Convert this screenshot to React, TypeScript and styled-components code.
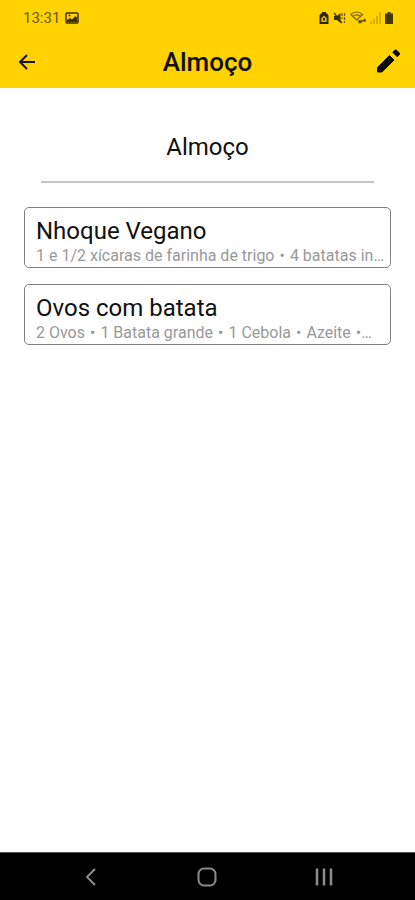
import React, { Fragment } from "react";
import styled, { createGlobalStyle } from "styled-components";

const GlobalStyle = createGlobalStyle`
  *, *::before, *::after { box-sizing: border-box; }
  body {
    margin: 0;
    background: #fff;
    color: #111;
    font-family: Roboto, "Liberation Sans", sans-serif;
  }
`;

const Screen = styled.div`
  display: flex;
  flex-direction: column;
  min-height: 100vh;
`;

const TopArea = styled.header`
  background: #ffd200;
`;

const StatusBar = styled.div`
  display: flex;
  align-items: center;
  justify-content: space-between;
  height: 35px;
  padding: 0 22px 0 23px;
`;

const StatusGroup = styled.div<{ $gap: number }>`
  display: flex;
  align-items: center;
  gap: ${({ $gap }) => $gap}px;
`;

const Clock = styled.time`
  font-size: 15px;
  line-height: 20px;
  color: #6b5a08;
`;

const AppBar = styled.div`
  display: grid;
  grid-template-columns: 40px 1fr 40px;
  align-items: center;
  height: 53px;
  padding: 0 7px;
`;

const IconButton = styled.button`
  display: flex;
  align-items: center;
  justify-content: center;
  width: 40px;
  height: 40px;
  padding: 0;
  border: 0;
  background: none;
  color: inherit;
  cursor: pointer;
`;

const AppTitle = styled.h1`
  margin: 0;
  font-size: 26px;
  line-height: 32px;
  font-weight: 500;
  text-align: center;
`;

const Content = styled.main`
  flex: 1;
  padding: 41px 24px 24px;
`;

const MealTitle = styled.h2`
  margin: 0 17px 24px;
  padding-bottom: 16px;
  border-bottom: 2px solid #c4c4c4;
  font-size: 24px;
  line-height: 36px;
  font-weight: 400;
  text-align: center;
`;

const RecipeList = styled.ul`
  display: flex;
  flex-direction: column;
  gap: 16px;
  margin: 0;
  padding: 0;
  list-style: none;
`;

const RecipeCard = styled.a`
  display: block;
  padding: 8px 3px 1px 11px;
  border: 1px solid #808080;
  border-radius: 5px;
  color: inherit;
  text-decoration: none;
`;

const RecipeName = styled.h3`
  margin: 0;
  font-size: 24px;
  line-height: 30px;
  font-weight: 400;
`;

const Ingredients = styled.p`
  margin: 0;
  overflow: hidden;
  font-size: 16px;
  line-height: 20px;
  color: #999;
  text-overflow: ellipsis;
  white-space: nowrap;
`;

const Bullet = styled.span<{ $last?: boolean }>`
  margin: 0 ${({ $last }) => ($last ? 0 : 5)}px 0 5px;
`;

const SystemNav = styled.nav`
  display: grid;
  grid-template-columns: repeat(3, 1fr);
  justify-items: center;
  align-items: center;
  height: 48px;
  padding: 0 33px;
  border-top: 1px solid #555;
  background: #000;
  color: #8c8c8c;
`;

const recipes = [
  {
    name: "Nhoque Vegano",
    ingredients: ["1 e 1/2 xícaras de farinha de trigo", "4 batatas in…"],
  },
  {
    name: "Ovos com batata",
    ingredients: ["2 Ovos", "1 Batata grande", "1 Cebola", "Azeite", "…"],
  },
];

const PictureIcon = () => (
  <svg width="14" height="12" viewBox="0 0 14 12" aria-hidden="true">
    <rect x="1" y="1" width="12" height="10" rx="1" fill="none" stroke="#3a3005" strokeWidth="1.5" />
    <path d="M2 10V8l3-2 2 1.5L10.500 4 12 5.500V10z" fill="#3a3005" />
    <circle cx="4.500" cy="3.500" r="1" fill="#3a3005" />
  </svg>
);

const BatterySaverIcon = () => (
  <svg width="10" height="12" viewBox="0 0 10 12" aria-hidden="true">
    <path d="M3 0h4v1.500h1L9.500 3.500V12h-9V3.500L2 1.500h1z" fill="#2e2604" />
    <path d="M2.300 10V6.200L5 3.500l2.700 2.700V10z" fill="#e0b800" />
    <path d="M4 6h2v2.500H4z" fill="#2e2604" />
  </svg>
);

const MutedIcon = () => (
  <svg width="13" height="12" viewBox="0 0 13 12" aria-hidden="true">
    <path d="M1 4h3l3.500-3v10L4 8H1z" fill="#3a3005" />
    <path d="M1 .800l8 10.400" stroke="#3a3005" strokeWidth="1.300" />
    <path d="M9 1v6M11.500 1v10" stroke="#6b5a08" strokeWidth="1.200" strokeDasharray="3 1" />
  </svg>
);

const WifiIcon = () => (
  <svg width="16" height="13" viewBox="0 0 16 13" aria-hidden="true" fill="none" stroke="#786507">
    <path d="M.800 3.500Q6.500-1.500 12.500 3.500L6.700 9z" strokeWidth="1.200" />
    <path d="M3 5.300Q6.700 2.500 10.500 5.300" strokeWidth="1.200" />
    <path d="M9 11.500l2-2 1.500 1L15 8M15 8v3M9 9v2.500h2.500" stroke="#5a4b06" strokeWidth="1.300" />
  </svg>
);

const SignalIcon = () => (
  <svg width="11" height="12" viewBox="0 0 11 12" aria-hidden="true" stroke="#c9a306" strokeWidth="1.500">
    <path d="M1 9.500V12M4 7v5M7 4v8M10 0v12" />
  </svg>
);

const BatteryIcon = () => (
  <svg width="8" height="12" viewBox="0 0 8 12" aria-hidden="true">
    <path d="M2.500 0h3v1.500H8V12H0V1.500h2.500z" fill="#453905" />
  </svg>
);

const BackArrowIcon = () => (
  <svg width="18" height="18" viewBox="0 0 18 18" aria-hidden="true" fill="none" stroke="#17150a" strokeWidth="2">
    <path d="M17 9H2M9 2L2 9l7 7" />
  </svg>
);

const PencilIcon = () => (
  <svg width="30" height="30" viewBox="0 0 30 30" aria-hidden="true" fill="#0b0a05" stroke="#0b0a05" strokeLinejoin="round">
    <path d="M4.500 25v-4.500L16.500 8.500l4.500 4.500L9 25z" />
    <path d="M19.800 5.300L22 3.100q.700-.500 1.400 0l3 3q.600.700 0 1.500L24.300 9.800z" />
  </svg>
);

const NavBackIcon = () => (
  <svg width="20" height="20" viewBox="0 0 20 20" aria-hidden="true" fill="none" stroke="currentColor" strokeWidth="2">
    <path d="M14 2L6 10l8 8" />
  </svg>
);

const NavHomeIcon = () => (
  <svg width="20" height="20" viewBox="0 0 20 20" aria-hidden="true" fill="none" stroke="currentColor" strokeWidth="2">
    <rect x="1.500" y="1.500" width="17" height="17" rx="5.500" />
  </svg>
);

const NavRecentsIcon = () => (
  <svg width="20" height="20" viewBox="0 0 20 20" aria-hidden="true" stroke="currentColor" strokeWidth="2.500">
    <path d="M3 1.500v17M10 1.500v17M17 1.500v17" />
  </svg>
);

export default function App() {
  return (
    <Screen>
      <GlobalStyle />
      <TopArea>
        <StatusBar>
          <StatusGroup $gap={5}>
            <Clock>13:31</Clock>
            <PictureIcon />
          </StatusGroup>
          <StatusGroup $gap={4}>
            <BatterySaverIcon />
            <MutedIcon />
            <WifiIcon />
            <SignalIcon />
            <BatteryIcon />
          </StatusGroup>
        </StatusBar>
        <AppBar>
          <IconButton type="button" aria-label="Voltar">
            <BackArrowIcon />
          </IconButton>
          <AppTitle>Almoço</AppTitle>
          <IconButton type="button" aria-label="Editar">
            <PencilIcon />
          </IconButton>
        </AppBar>
      </TopArea>
      <Content>
        <MealTitle>Almoço</MealTitle>
        <RecipeList>
          {recipes.map(({ name, ingredients }) => (
            <li key={name}>
              <RecipeCard href="#">
                <RecipeName>{name}</RecipeName>
                <Ingredients>
                  {ingredients.map((item, index) => (
                    <Fragment key={item}>
                      {index > 0 && <Bullet $last={item === "…"}>•</Bullet>}
                      {item}
                    </Fragment>
                  ))}
                </Ingredients>
              </RecipeCard>
            </li>
          ))}
        </RecipeList>
      </Content>
      <SystemNav aria-label="Sistema">
        <IconButton type="button" aria-label="Retornar">
          <NavBackIcon />
        </IconButton>
        <IconButton type="button" aria-label="Início">
          <NavHomeIcon />
        </IconButton>
        <IconButton type="button" aria-label="Recentes">
          <NavRecentsIcon />
        </IconButton>
      </SystemNav>
    </Screen>
  );
}
